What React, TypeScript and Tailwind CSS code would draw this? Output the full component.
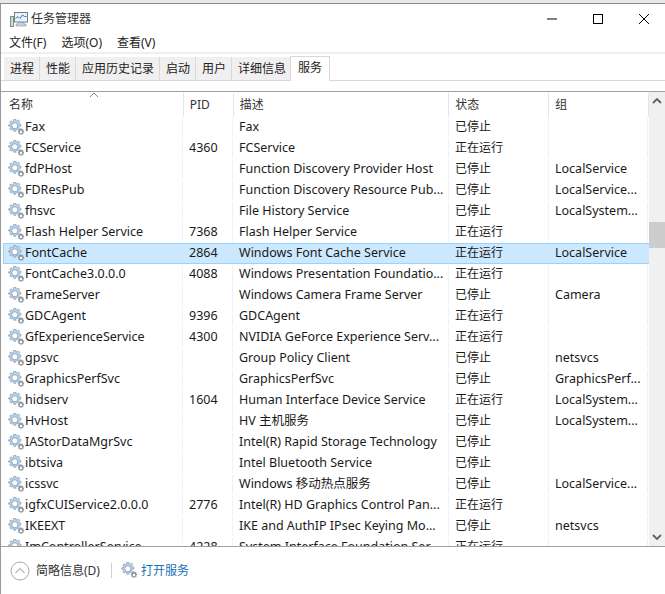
import React from 'react';

const font = { fontFamily: '"Noto Sans", "Noto Sans CJK SC", sans-serif' };

interface ServiceRow {
  name: string;
  pid?: string;
  desc: string;
  status: string;
  group?: string;
  selected?: boolean;
}

const rows: ServiceRow[] = [
  { name: 'Fax', desc: 'Fax', status: '已停止' },
  { name: 'FCService', pid: '4360', desc: 'FCService', status: '正在运行' },
  { name: 'fdPHost', desc: 'Function Discovery Provider Host', status: '已停止', group: 'LocalService' },
  { name: 'FDResPub', desc: 'Function Discovery Resource Pub...', status: '已停止', group: 'LocalService...' },
  { name: 'fhsvc', desc: 'File History Service', status: '已停止', group: 'LocalSystem...' },
  { name: 'Flash Helper Service', pid: '7368', desc: 'Flash Helper Service', status: '正在运行' },
  { name: 'FontCache', pid: '2864', desc: 'Windows Font Cache Service', status: '正在运行', group: 'LocalService', selected: true },
  { name: 'FontCache3.0.0.0', pid: '4088', desc: 'Windows Presentation Foundatio...', status: '正在运行' },
  { name: 'FrameServer', desc: 'Windows Camera Frame Server', status: '已停止', group: 'Camera' },
  { name: 'GDCAgent', pid: '9396', desc: 'GDCAgent', status: '正在运行' },
  { name: 'GfExperienceService', pid: '4300', desc: 'NVIDIA GeForce Experience Serv...', status: '正在运行' },
  { name: 'gpsvc', desc: 'Group Policy Client', status: '已停止', group: 'netsvcs' },
  { name: 'GraphicsPerfSvc', desc: 'GraphicsPerfSvc', status: '已停止', group: 'GraphicsPerf...' },
  { name: 'hidserv', pid: '1604', desc: 'Human Interface Device Service', status: '正在运行', group: 'LocalSystem...' },
  { name: 'HvHost', desc: 'HV 主机服务', status: '已停止', group: 'LocalSystem...' },
  { name: 'IAStorDataMgrSvc', desc: 'Intel(R) Rapid Storage Technology', status: '已停止' },
  { name: 'ibtsiva', desc: 'Intel Bluetooth Service', status: '已停止' },
  { name: 'icssvc', desc: 'Windows 移动热点服务', status: '已停止', group: 'LocalService...' },
  { name: 'igfxCUIService2.0.0.0', pid: '2776', desc: 'Intel(R) HD Graphics Control Pan...', status: '正在运行' },
  { name: 'IKEEXT', desc: 'IKE and AuthIP IPsec Keying Mo...', status: '已停止', group: 'netsvcs' },
  { name: 'ImControllerService', pid: '4228', desc: 'System Interface Foundation Ser...', status: '正在运行' },
];

const tabs = ['进程', '性能', '应用历史记录', '启动', '用户', '详细信息'];

const gearPath =
  'M6.9 0h2.2l.3 2 1.3.5 1.6-1.2 1.6 1.6-1.2 1.6.5 1.3 2 .3v2.2l-2 .3-.5 1.3 1.2 1.6-1.6 1.6-1.6-1.2-1.3.5-.3 2H6.9l-.3-2-1.3-.5-1.6 1.2-1.6-1.6 1.2-1.6-.5-1.3-2-.3V6.900l2-.3.5-1.3-1.200-1.600 1.600-1.600 1.600 1.200 1.300-.5z';

const GearIcon = () => (
  <svg width="17" height="17" viewBox="0 0 20 20" className="shrink-0">
    <path d={gearPath} fill="#c3d6e8" stroke="#7f9db8" strokeWidth="0.9" />
    <circle cx="8" cy="8" r="3.6" fill="#ffffff" stroke="#7f9db8" strokeWidth="1" />
    <g transform="translate(11.500 11.500) scale(0.47)">
      <path d={gearPath} fill="#8f9aa5" stroke="#6c7680" strokeWidth="1" />
      <circle cx="8" cy="8" r="3" fill="#ffffff" />
    </g>
  </svg>
);

const AppIcon = () => (
  <svg width="18" height="16" viewBox="0 0 18 16" className="shrink-0">
    <rect x="0.500" y="5.500" width="3" height="10" fill="#d5dbd0" stroke="#7f8f78" />
    <rect x="4.500" y="1.500" width="13" height="9.500" fill="#eaf3fb" stroke="#6f8296" />
    <path d="M5.500 7.500l2.500-2 2 2 2.500-3.500 2 1.500h2" fill="none" stroke="#2f7fb8" />
    <path d="M8 11.500h6v1.500h2v2H6v-2h2z" fill="#c6d0da" stroke="#8595a5" strokeWidth="0.600" />
  </svg>
);

const App: React.FC = () => {
  return (
    <div className="w-[665px] h-[594px] bg-white flex flex-col overflow-hidden text-[12.500px] text-[#1a1a1a]" style={font}>
      {/* Window top edge */}
      <div className="h-[3px] bg-[#e8e8e8] shrink-0" />
      <div className="h-[1px] bg-[#8a8a8a] shrink-0" />

      <div className="flex-1 min-h-0 flex flex-col border-l border-[#9a9a9a]">
        {/* Title bar */}
        <div className="h-[28px] shrink-0 flex items-center pl-[9px] pt-[1px]">
          <AppIcon />
          <span className="ml-[3px] text-[12px] text-[#333333]">任务管理器</span>
          <div className="ml-auto flex items-center h-full text-black">
            <svg width="12" height="12" viewBox="0 0 12 12" className="mr-[34px]">
              <path d="M1 6h10" stroke="#000" strokeWidth="1" />
            </svg>
            <svg width="12" height="12" viewBox="0 0 12 12" className="mr-[34px]">
              <rect x="1.500" y="1.500" width="9" height="9" fill="none" stroke="#000" strokeWidth="1" />
            </svg>
            <svg width="12" height="12" viewBox="0 0 12 12" className="mr-[15px]">
              <path d="M1 1l10 10M11 1L1 11" stroke="#000" strokeWidth="1" />
            </svg>
          </div>
        </div>

        {/* Menu */}
        <div className="h-[20px] shrink-0 flex items-center pl-[8px] pt-[2px] gap-[15px] text-[12px] text-[#222222]">
          <span>文件(F)</span>
          <span>选项(O)</span>
          <span>查看(V)</span>
        </div>
        <div className="h-[2px] bg-[#f0f0f0] shrink-0" />

        {/* Tabs */}
        <div className="h-[27px] shrink-0 flex items-end pl-[3px] border-b border-[#d9d9d9] text-[12px] text-[#222222]">
          {tabs.map((tab) => (
            <div key={tab} className="h-[24px] pl-[6px] pr-[5px] flex items-center bg-[#f0f0f0] border-r border-[#d9d9d9] -mb-[1px] border-b">
              {tab}
            </div>
          ))}
          <div className="h-[25px] px-[7px] -ml-[2px] -mt-[1px] flex items-start pt-[2px] bg-white border border-[#d9d9d9] border-b-0 -mb-[1px] relative">
            服务
          </div>
        </div>
        <div className="h-[10px] shrink-0" />

        {/* Table */}
        <div className="flex-1 min-h-0 flex border-t border-[#a0a0a0] border-b overflow-hidden">
          <div className="flex-1 min-w-0 flex flex-col overflow-hidden pl-[2px]">
            <div className="h-[25px] pt-[1px] shrink-0 flex relative text-[12px] text-[#333333]">
              <span className="absolute left-[86px] top-[0px] text-[#777777]">
                <svg width="10" height="6" viewBox="0 0 10 6" className="block">
                  <path d="M1 5l4-4 4 4" fill="none" stroke="#8a8a8a" strokeWidth="1" />
                </svg>
              </span>
              <div className="w-[181px] pl-[6px] flex items-center border-r border-[#e5e5e5]">名称</div>
              <div className="w-[50px] pl-[6px] flex items-center border-r border-[#e5e5e5]">PID</div>
              <div className="w-[216px] pl-[6px] flex items-center border-r border-[#e5e5e5]">描述</div>
              <div className="w-[100px] pl-[6px] flex items-center border-r border-[#e5e5e5]">状态</div>
              <div className="w-[100px] pl-[6px] flex items-center border-r border-[#e5e5e5]">组</div>
            </div>
            {rows.map((row) => (
              <div
                key={row.name}
                className={`h-[21px] w-[647px] shrink-0 flex items-center whitespace-nowrap border ${
                  row.selected ? 'bg-[#cce8ff] border-[#99d1ff]' : 'border-transparent'
                }`}
              >
                <div className={`w-[180px] -ml-[1px] h-full pl-[5px] flex items-center border-r ${row.selected ? 'border-transparent' : 'border-[#eef3fa]'}`}>
                  <GearIcon />
                  <span>{row.name}</span>
                </div>
                <div className={`w-[50px] h-full pl-[6px] flex items-center border-r ${row.selected ? 'border-transparent' : 'border-[#eef3fa]'}`}>{row.pid}</div>
                <div className={`w-[216px] h-full pl-[6px] flex items-center border-r ${row.selected ? 'border-transparent' : 'border-[#eef3fa]'}`}>{row.desc}</div>
                <div className={`w-[100px] h-full pl-[6px] pb-[1px] flex items-center text-[12px] border-r ${row.selected ? 'border-transparent' : 'border-[#eef3fa]'}`}>{row.status}</div>
                <div className={`w-[99px] h-full pl-[6px] flex items-center ${row.selected ? '' : 'border-r border-[#eef3fa]'}`}>{row.group}</div>
              </div>
            ))}
          </div>

          {/* Scrollbar */}
          <div className="w-[16px] shrink-0 bg-[#f0f0f0] flex flex-col items-center">
            <svg width="10" height="6" viewBox="0 0 10 6" className="mt-[6px] shrink-0">
              <path d="M1 5l4-4 4 4" fill="none" stroke="#606060" strokeWidth="1.800" />
            </svg>
            <div className="w-full h-[26px] bg-[#cdcdcd] mt-[118px] shrink-0" />
            <svg width="10" height="6" viewBox="0 0 10 6" className="mt-auto mb-[6px] shrink-0">
              <path d="M1 1l4 4 4-4" fill="none" stroke="#606060" strokeWidth="1.800" />
            </svg>
          </div>
        </div>

        {/* Footer */}
        <div className="h-[47px] shrink-0 flex items-center pl-[9px] text-[12px]">
          <svg width="20" height="20" viewBox="0 0 20 20" className="shrink-0">
            <circle cx="10" cy="10" r="9" fill="none" stroke="#a8a8a8" strokeWidth="1" />
            <path d="M5.500 12l4.500-4.500 4.500 4.500" fill="none" stroke="#8a8a8a" strokeWidth="1" />
          </svg>
          <span className="ml-[6px] text-[#333333]">简略信息(D)</span>
          <div className="w-px h-[15px] bg-[#d0d0d0] ml-[11px] mr-[9px]" />
          <GearIcon />
          <span className="ml-[3px] text-[#1a6fb5]">打开服务</span>
        </div>
      </div>
    </div>
  );
};

export default App;
